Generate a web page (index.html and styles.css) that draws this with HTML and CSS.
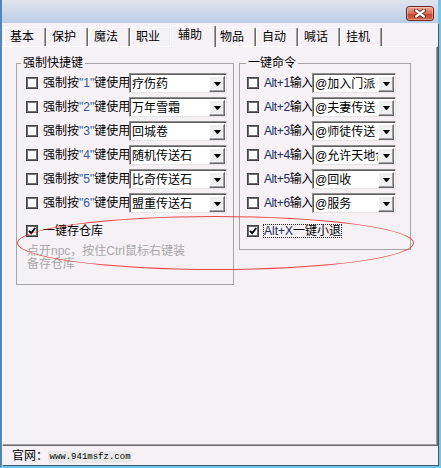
FILE: index.html
```html
<!DOCTYPE html>
<html lang="zh-CN">
<head>
	<meta charset="UTF-8">
	<title>辅助</title>
	<link rel="stylesheet" href="styles.css">
</head>
<body>
	<div class="window">
		<div class="titlebar">
			<span class="close-btn">
				<svg width="12" height="9" viewBox="0 0 12 9">
					<path d="M2 1.5l8 6M10 1.5l-8 6" stroke="#5a1f16" stroke-width="4" stroke-linecap="round"/>
					<path d="M2 1.5l8 6M10 1.5l-8 6" stroke="#fff" stroke-width="2.2" stroke-linecap="round"/>
				</svg>
			</span>
		</div>
		<div class="client">
			<ul class="tabs">
				<li>基本</li>
				<li>保护</li>
				<li>魔法</li>
				<li>职业</li>
				<li class="on">辅助</li>
				<li>物品</li>
				<li>自动</li>
				<li>喊话</li>
				<li>挂机</li>
			</ul>
			<div class="panel">
				<div class="groups">
					<fieldset class="group group-keys">
						<legend>强制快捷键</legend>
						<div class="gbody">
							<div class="row"><span class="chk"></span><span class="lbl">强制按<em>"1"</em>键使用</span><div class="combo"><span class="val">疗伤药</span><span class="drop"><i></i></span></div></div>
							<div class="row"><span class="chk"></span><span class="lbl">强制按<em>"2"</em>键使用</span><div class="combo"><span class="val">万年雪霜</span><span class="drop"><i></i></span></div></div>
							<div class="row"><span class="chk"></span><span class="lbl">强制按<em>"3"</em>键使用</span><div class="combo"><span class="val">回城卷</span><span class="drop"><i></i></span></div></div>
							<div class="row"><span class="chk"></span><span class="lbl">强制按<em>"4"</em>键使用</span><div class="combo"><span class="val">随机传送石</span><span class="drop"><i></i></span></div></div>
							<div class="row"><span class="chk"></span><span class="lbl">强制按<em>"5"</em>键使用</span><div class="combo"><span class="val">比奇传送石</span><span class="drop"><i></i></span></div></div>
							<div class="row"><span class="chk"></span><span class="lbl">强制按<em>"6"</em>键使用</span><div class="combo"><span class="val">盟重传送石</span><span class="drop"><i></i></span></div></div>
							<div class="row extra">
								<span class="chk"><svg width="8" height="8" viewBox="0 0 8 8"><path d="M1 3.8l2.2 2.4L7.2 1" fill="none" stroke="#000" stroke-width="1.9"/></svg></span>
								<span>一键存仓库</span>
							</div>
							<p class="hint">点开npc，按住Ctrl鼠标右键装<br>备存仓库</p>
						</div>
					</fieldset>
					<fieldset class="group group-cmds">
						<legend>一键命令</legend>
						<div class="gbody">
							<div class="row"><span class="chk"></span><span class="lbl"><b>Alt+1</b>输入</span><div class="combo"><span class="val">@加入门派</span><span class="drop"><i></i></span></div></div>
							<div class="row"><span class="chk"></span><span class="lbl"><b>Alt+2</b>输入</span><div class="combo"><span class="val">@夫妻传送</span><span class="drop"><i></i></span></div></div>
							<div class="row"><span class="chk"></span><span class="lbl"><b>Alt+3</b>输入</span><div class="combo"><span class="val">@师徒传送</span><span class="drop"><i></i></span></div></div>
							<div class="row"><span class="chk"></span><span class="lbl"><b>Alt+4</b>输入</span><div class="combo"><span class="val">@允许天地合一</span><span class="drop"><i></i></span></div></div>
							<div class="row"><span class="chk"></span><span class="lbl"><b>Alt+5</b>输入</span><div class="combo"><span class="val">@回收</span><span class="drop"><i></i></span></div></div>
							<div class="row"><span class="chk"></span><span class="lbl"><b>Alt+6</b>输入</span><div class="combo"><span class="val">@服务</span><span class="drop"><i></i></span></div></div>
							<div class="row extra">
								<span class="chk"><svg width="8" height="8" viewBox="0 0 8 8"><path d="M1 3.8l2.2 2.4L7.2 1" fill="none" stroke="#000" stroke-width="1.9"/></svg></span>
								<span class="focus"><b>Alt+X</b>一键小退</span>
							</div>
						</div>
					</fieldset>
				</div>
				<div class="mark"></div>
			</div>
			<div class="status">官网：<span class="url">www.941msfz.com</span></div>
		</div>
	</div>
</body>
</html>
```

FILE: styles.css
```css
*{
	margin: 0;
	padding: 0;
}
body{
	background: #fff;
	font: 12px/16px "Liberation Sans", "Noto Sans CJK SC", sans-serif;
	color: #000;
}
.window{
	width: 441px;
	height: 468px;
	box-sizing: border-box;
	display: flex;
	flex-direction: column;
	border-left: 2px solid #5485b4;
	border-right: 3px solid #6fc8ea;
	border-bottom: 3px solid #6fc8ea;
	background: #f6f1f5;
}
.titlebar{
	flex: none;
	height: 23px;
	box-sizing: border-box;
	padding: 6px 4px 0 0;
	display: flex;
	justify-content: flex-end;
	align-items: flex-start;
	background: linear-gradient(#dfe5ee, #bccde6);
}
.close-btn{
	width: 28px;
	height: 15px;
	box-sizing: border-box;
	border: 1px solid #6b2b22;
	border-radius: 3px;
	display: flex;
	align-items: center;
	justify-content: center;
	background: linear-gradient(#eaa898, #d66a52 50%, #c2432c 51%, #d3654a);
	box-shadow: inset 0 0 0 1px rgba(255,255,255,.35);
}
.client{
	flex: 1;
	min-height: 0;
	display: flex;
	flex-direction: column;
	box-shadow: 1px 1px 0 #3d5a72;
}
.tabs{
	list-style: none;
	flex: none;
	height: 23px;
	padding-left: 2px;
	display: flex;
	align-items: flex-end;
}
.tabs li{
	width: 42px;
	height: 19px;
	box-sizing: border-box;
	padding-left: 5px;
	border-top: 1px solid #fff;
	border-left: 1px solid #fff;
	border-right: 1px solid #696969;
	border-radius: 2px 2px 0 0;
	box-shadow: inset -1px 0 #a0a0a0;
	line-height: 18px;
	white-space: nowrap;
}
.tabs li.on{
	width: 46px;
	height: 22px;
	margin: 0 -2px -1px;
	padding-left: 7px;
	line-height: 19px;
	position: relative;
	z-index: 1;
	background: #f6f1f5;
}
.panel{
	flex: 1;
	position: relative;
	border-top: 1px solid #fff;
	border-left: 1px solid #fff;
	border-right: 1px solid #696969;
	border-bottom: 1px solid #696969;
	box-shadow: inset -1px -1px #a0a0a0;
	padding: 10px 0 0 13px;
}
.groups{
	display: flex;
	gap: 5px;
	align-items: flex-start;
}
.group{
	border: 1px solid #a5a5a5;
	min-width: 0;
}
.group legend{
	margin-left: 4px;
	padding: 0 2px;
	line-height: 13px;
}
.group-keys{
	width: 216px;
}
.group-cmds{
	width: 170px;
}
.group-cmds legend{
	margin-left: 6px;
}
.gbody{
	padding: 1px 0 13px 9px;
}
.group-cmds .gbody{
	padding: 1px 0 6px 7px;
}
.row{
	height: 24px;
	display: flex;
	align-items: center;
}
.row.extra{
	margin-top: 4px;
}
.chk{
	flex: none;
	width: 12px;
	height: 12px;
	box-sizing: border-box;
	margin-right: 5px;
	border: 1px solid #404040;
	box-shadow: inset 0 0 0 1px #6e6e6e;
	background: #fdfcfd;
	display: flex;
	align-items: center;
	justify-content: center;
}
.lbl{
	flex: none;
	width: 86px;
	white-space: nowrap;
}
.lbl em{
	font-style: normal;
	color: #2d5aa0;
}
.group-cmds .lbl{
	width: 48px;
	letter-spacing: -.4px;
}
.group-cmds b{
	font-weight: normal;
	color: #1c2b5e;
}
.combo{
	flex: none;
	position: relative;
	width: 98px;
	height: 20px;
	box-sizing: border-box;
	display: flex;
	align-items: center;
	overflow: hidden;
	background: #fff;
	border: 1px solid;
	border-color: #8f8f8f #e4e4e4 #e4e4e4 #8f8f8f;
	box-shadow: inset 1px 1px #5e5e5e;
}
.group-cmds .combo{
	width: 84px;
}
.combo .val{
	flex: 1;
	min-width: 0;
	padding: 1px 0 0 2px;
	white-space: nowrap;
	overflow: hidden;
}
.drop{
	flex: none;
	width: 16px;
	height: 16px;
	box-sizing: border-box;
	margin-right: 1px;
	margin-top: 1px;
	border: 1px solid;
	border-color: #fff #696969 #696969 #fff;
	box-shadow: inset -1px -1px #a0a0a0;
	background: #f0f0f0;
	display: flex;
	align-items: center;
	justify-content: center;
}
.drop i{
	width: 1px;
	height: 0;
	border-left: 3px solid transparent;
	border-right: 3px solid transparent;
	border-top: 4px solid #000;
}
.focus{
	margin-left: -1px;
	line-height: 12px;
	border: 1px dotted #222;
	white-space: nowrap;
}
.hint{
	margin-top: 2px;
	padding-left: 1px;
	line-height: 13px;
	color: #a8a8a8;
}
.mark{
	position: absolute;
	left: 14px;
	top: 169px;
	width: 395px;
	height: 52px;
	border: 1px solid rgba(232,40,40,.85);
	border-radius: 50%;
	pointer-events: none;
}
.status{
	flex: none;
	height: 19px;
	box-sizing: border-box;
	padding: 2px 0 0 10px;
	display: flex;
	align-items: center;
	line-height: 13px;
}
.url{
	font: 9px/12px "Liberation Mono", monospace;
	padding: 0 1.5px;
	background: #e9e9e9;
}
```
